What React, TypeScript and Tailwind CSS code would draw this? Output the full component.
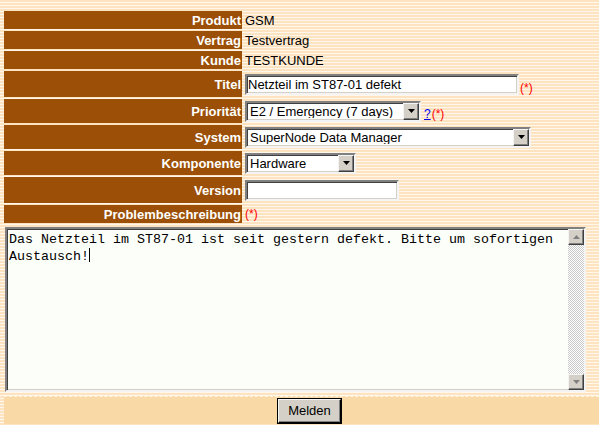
import React from 'react';

const inset =
  'border-2 border-t-[#808080] border-l-[#808080] border-b-[#f4f4f4] border-r-[#f4f4f4] shadow-[inset_1px_1px_0_#404040,inset_-1px_-1px_0_#d4d0c8]';

const raised =
  'bg-[#d4d0c8] border border-t-[#f4f4f4] border-l-[#f4f4f4] border-b-[#404040] border-r-[#404040] shadow-[inset_-1px_-1px_0_#808080]';

const Label = ({ children }: { children: React.ReactNode }) => (
  <div className="bg-[#9c4f06] text-white font-bold text-[13px] leading-none flex items-center justify-end pr-[1px]">
    {children}
  </div>
);

const Required = () => <span className="text-[#ff0000] text-[12px] leading-none self-end mb-[3px]">(*)</span>;

const Arrow = ({ up, color = '#000' }: { up?: boolean; color?: string }) => (
  <svg width="7" height="4" viewBox="0 0 7 4">
    <polygon points={up ? '0,4 7,4 3.5,0' : '0,0 7,0 3.5,4'} fill={color} />
  </svg>
);

const Select = ({ value, width }: { value: string; width: string }) => (
  <div className={`${inset} ${width} h-[21px] bg-white flex items-center`}>
    <span className="flex-1 pl-[3px] text-[13px] leading-none text-black whitespace-nowrap overflow-hidden">{value}</span>
    <div className={`${raised} w-[16px] h-[17px] flex items-center justify-center`}>
      <Arrow />
    </div>
  </div>
);

const TextInput = ({ value, width }: { value: string; width: string }) => (
  <div className={`${inset} ${width} h-[21px] bg-white flex items-center`}>
    <span className="pl-[1px] text-[13px] leading-none text-black whitespace-nowrap">{value}</span>
  </div>
);

const Value = ({ children }: { children: React.ReactNode }) => (
  <div className="flex items-center pl-[1px] gap-[1px] text-[13px] leading-none text-black">{children}</div>
);

export default function App() {
  return (
    <div className="w-[599px] h-[425px] overflow-hidden pt-[11px] pl-[4px] font-['Liberation_Sans',Arial,sans-serif] bg-[repeating-linear-gradient(to_bottom,#fde3c0_0px,#fde3c0_2px,#fff7ec_2px,#fff7ec_3px)]">
      <div className="grid grid-cols-[238px_1fr] grid-rows-[18px_18px_18px_26px_24px_24px_24px_26px_18px_169px_28px] gap-[2px]">
        <Label>Produkt</Label>
        <Value>GSM</Value>

        <Label>Vertrag</Label>
        <Value>Testvertrag</Value>

        <Label>Kunde</Label>
        <Value>TESTKUNDE</Value>

        <Label>Titel</Label>
        <Value>
          <TextInput value="Netzteil im ST87-01 defekt" width="w-[274px]" />
          <Required />
        </Value>

        <Label>Priorität</Label>
        <Value>
          <Select value="E2 / Emergency (7 days)" width="w-[176px]" />
          <span className="ml-[2px] text-[12px] leading-none text-[#0000ee] underline self-end mb-[3px]">?</span>
          <Required />
        </Value>

        <Label>System</Label>
        <Value>
          <Select value="SuperNode Data Manager" width="w-[286px]" />
        </Value>

        <Label>Komponente</Label>
        <Value>
          <Select value="Hardware" width="w-[111px]" />
        </Value>

        <Label>Version</Label>
        <Value>
          <TextInput value="" width="w-[154px]" />
        </Value>

        <Label>Problembeschreibung</Label>
        <Value>
          <Required />
        </Value>

        <div className="col-span-2 pt-[2px] pl-[1px]">
          <div className={`${inset} w-[581px] h-[165px] bg-[#fcfefa] flex`}>
            <div className="flex-1 pl-[2px] pt-[3px] font-['Liberation_Mono',monospace] text-[13.33px] leading-[16px] text-black whitespace-pre-wrap">
              Das Netzteil im ST87-01 ist seit gestern defekt. Bitte um sofortigen{'\n'}Austausch!
              <span className="inline-block w-px h-[14px] bg-black align-[-2px]" />
            </div>
            <div className="w-[16px] flex flex-col">
              <div className={`${raised} h-[16px] flex items-center justify-center`}>
                <Arrow up color="#808080" />
              </div>
              <div className="flex-1 bg-[repeating-conic-gradient(#c8c8c8_0_25%,#ffffff_0_50%)] bg-[length:2px_2px]" />
              <div className={`${raised} h-[16px] flex items-center justify-center`}>
                <Arrow color="#808080" />
              </div>
            </div>
          </div>
        </div>

        <div className="col-span-2 bg-[#f9d9a5] border-t border-dashed border-t-[#fff4e4] flex items-center justify-center pl-[16px]">
          <button className="w-[63px] h-[24px] bg-[#d4d0c8] border border-t-[#f4f4f4] border-l-[#f4f4f4] border-b-black border-r-black shadow-[inset_-1px_-1px_0_#808080,0_0_0_1px_#000] text-[13px] leading-none text-black">
            Melden
          </button>
        </div>
      </div>
    </div>
  );
}
